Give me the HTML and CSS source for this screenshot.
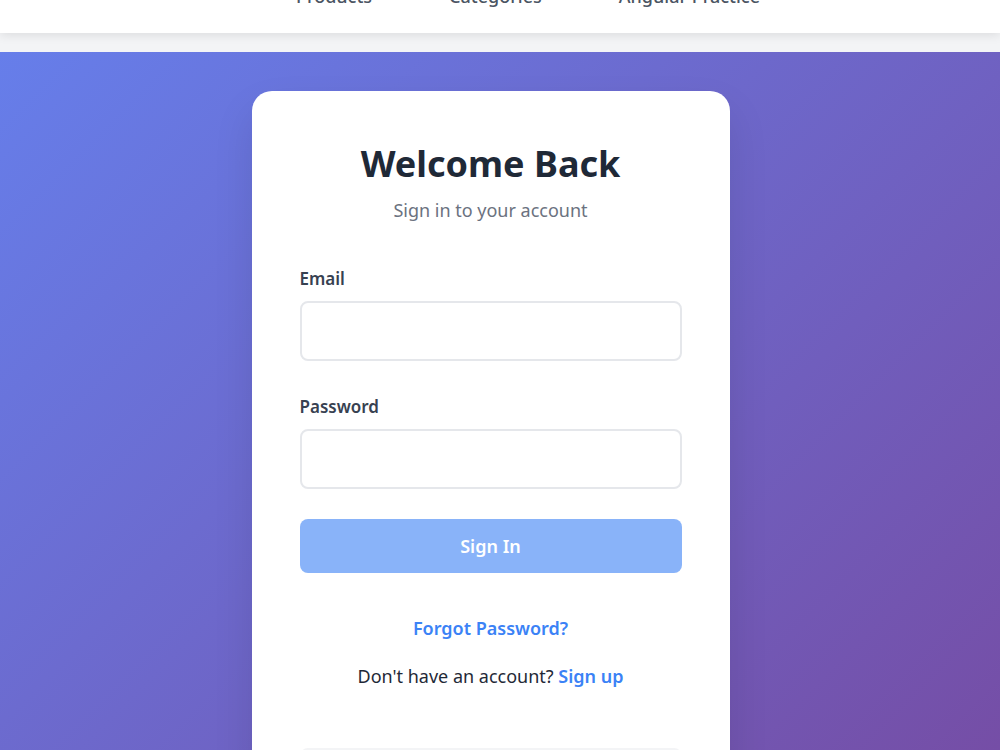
FILE: index.html
```html
<!DOCTYPE html>
<html lang="en">
<head>
  <meta charset="UTF-8" />
  <meta name="viewport" content="width=device-width, initial-scale=1.0" />
  <title>Sign In</title>

  <!-- ----------  Styles  ---------- -->
  <link rel="stylesheet" href="styles.css">
</head>

<body>
  <!-- Top navigation -->
  <header class="topbar">
    <nav class="nav-links">
      <a href="#">Products</a>
      <a href="#">Categories</a>
      <a href="#">Angular Practice</a>
    </nav>
  </header>

  <main class="auth-page">
    <div class="auth-card">
      <h1>Welcome Back</h1>
      <p class="subtitle">Sign in to your account</p>

      <form class="auth-form" onsubmit="return false">
        <div class="field">
          <label for="email">Email</label>
          <input type="email" id="email" />
        </div>

        <div class="field">
          <label for="password">Password</label>
          <input type="password" id="password" />
        </div>

        <button class="btn-primary" type="submit" disabled>Sign In</button>
      </form>

      <div class="auth-links">
        <a href="#" class="link">Forgot Password?</a>
        <p>Don't have an account? <a href="#" class="link">Sign up</a></p>
      </div>

      <!-- Demo credentials -->
      <div class="demo-box">
        <p>Demo credentials</p>
      </div>
    </div>
  </main>
</body>
</html>
```

FILE: styles.css
```css
/* ---------- Base ---------- */
body {
  margin: 0;
  font-family: "Noto Sans", "Open Sans", sans-serif;
  background: #f3f4f6;
  color: #1f2937;
  overflow: hidden;
}

/* ---------- Header / nav ---------- */
.topbar {
  background: #fff;
  height: 70px;
  margin-top: -37px;          /* page is scrolled a little */
  box-shadow: 0 2px 10px #0000001a;
  display: flex;
  align-items: center;
  justify-content: center;
  position: relative;
  z-index: 2;
}
.nav-links {
  display: flex;
  gap: 77px;
  margin-left: 56px;
  margin-top: -5px;
}
.nav-links a {
  color: #4b5563;
  text-decoration: none;
  font-weight: 500;
  font-size: 18px;
}

/* ---------- Gradient area ---------- */
.auth-page {
  margin-top: 19px;
  min-height: 700px;
  padding: 39px 19px 0 0;
  background: linear-gradient(135deg, #667eea 0%, #764ba2 100%);
  display: flex;
  justify-content: center;
  align-items: flex-start;
}

/* ---------- Card ---------- */
.auth-card {
  width: 382px;
  background: #fff;
  border-radius: 20px;
  padding: 51px 48px 48px;
  box-shadow: 0 20px 40px #0000001a;
}
.auth-card h1 {
  margin: 0;
  text-align: center;
  font-size: 36px;
  font-weight: 700;
  color: #1f2937;
  line-height: 1.2;
}
.subtitle {
  margin: 13px 0 0;
  text-align: center;
  color: #6b7280;
  font-size: 18px;
}

/* ---------- Form ---------- */
.auth-form { margin-top: 45px; }
.field { margin-bottom: 34px; }
.field:last-of-type { margin-bottom: 30px; }
.field label {
  display: block;
  margin-bottom: 11px;
  font-weight: 600;
  font-size: 17px;
  color: #374151;
}
.field input {
  display: block;
  width: 100%;
  box-sizing: border-box;
  height: 60px;
  padding: 0 16px;
  border: 2px solid #e5e7eb;
  border-radius: 8px;
  font-size: 16px;
  font-family: inherit;
}
.btn-primary {
  display: block;
  width: 100%;
  height: 54px;
  border: none;
  border-radius: 8px;
  background: #3b82f6;
  opacity: 0.6;
  color: #fff;
  font-family: inherit;
  font-size: 18px;
  font-weight: 600;
}

/* ---------- Links ---------- */
.auth-links {
  margin-top: 43px;
  text-align: center;
  font-size: 18px;
}
.auth-links p { margin: 24px 0 0; color: #1f2937; }
.link {
  color: #3b82f6;
  text-decoration: none;
  font-weight: 600;
}

.demo-box {
  margin-top: 60px;
  background: #f3f4f6;
  border-radius: 8px;
  padding: 16px;
}
.demo-box p { margin: 0; }
```
